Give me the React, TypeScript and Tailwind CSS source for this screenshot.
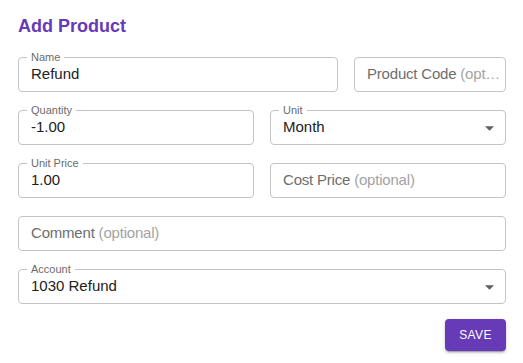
import React from "react";

type FieldProps = {
  label?: string;
  value?: string;
  placeholder?: string;
  hint?: string;
  select?: boolean;
  className?: string;
};

function Field({ label, value, placeholder, hint, select, className }: FieldProps) {
  return (
    <div
      className={`relative flex h-[35px] items-center rounded-[4px] border border-[#c4c4c4] bg-white pl-[12px] pr-[8px] ${
        className ?? ""
      }`}
    >
      {label && (
        <span className="absolute -top-[7px] left-[8px] bg-white px-[4px] text-[11px] leading-[13px] text-[#6b6b6b]">
          {label}
        </span>
      )}
      {value ? (
        <span className="whitespace-nowrap text-[15px] text-[#212121]">{value}</span>
      ) : (
        <span className="whitespace-nowrap text-[15px] tracking-[-0.2px] text-[#6e6e6e]">
          {placeholder} <span className="text-[#a3a3a3]">{hint}</span>
        </span>
      )}
      {select && (
        <svg
          className="absolute right-[11px] top-[15px]"
          width="9"
          height="5"
          viewBox="0 0 10 5"
        >
          <path d="M0 0l5 5 5-5z" fill="#5f5f5f" />
        </svg>
      )}
    </div>
  );
}

export default function App() {
  return (
    <div className="min-h-[363px] bg-white pl-[18px] pr-[17px] pt-[14px] pb-3 font-['Liberation_Sans',Arial,sans-serif]">
      <h2 className="text-[18px] font-bold leading-[24px] text-[#673ab7]">Add Product</h2>

      <div className="mt-[19px] grid grid-cols-12 gap-x-4 gap-y-[18px]">
        <Field className="col-span-8" label="Name" value="Refund" />
        <Field className="col-span-4" placeholder="Product Code" hint="(opt…" />

        <Field className="col-span-6" label="Quantity" value="-1.00" />
        <Field className="col-span-6" label="Unit" value="Month" select />

        <Field className="col-span-6" label="Unit Price" value="1.00" />
        <Field className="col-span-6" placeholder="Cost Price" hint="(optional)" />

        <Field className="col-span-12" placeholder="Comment" hint="(optional)" />

        <Field className="col-span-12" label="Account" value="1030 Refund" select />
      </div>

      <div className="mt-[15px] flex justify-end">
        <button className="h-[32px] w-[61px] rounded-[4px] bg-[#673ab7] text-[12px] tracking-[0.4px] text-white shadow-[0_3px_1px_-2px_rgba(0,0,0,0.2),0_2px_2px_0_rgba(0,0,0,0.14),0_1px_5px_0_rgba(0,0,0,0.12)]">
          SAVE
        </button>
      </div>
    </div>
  );
}
